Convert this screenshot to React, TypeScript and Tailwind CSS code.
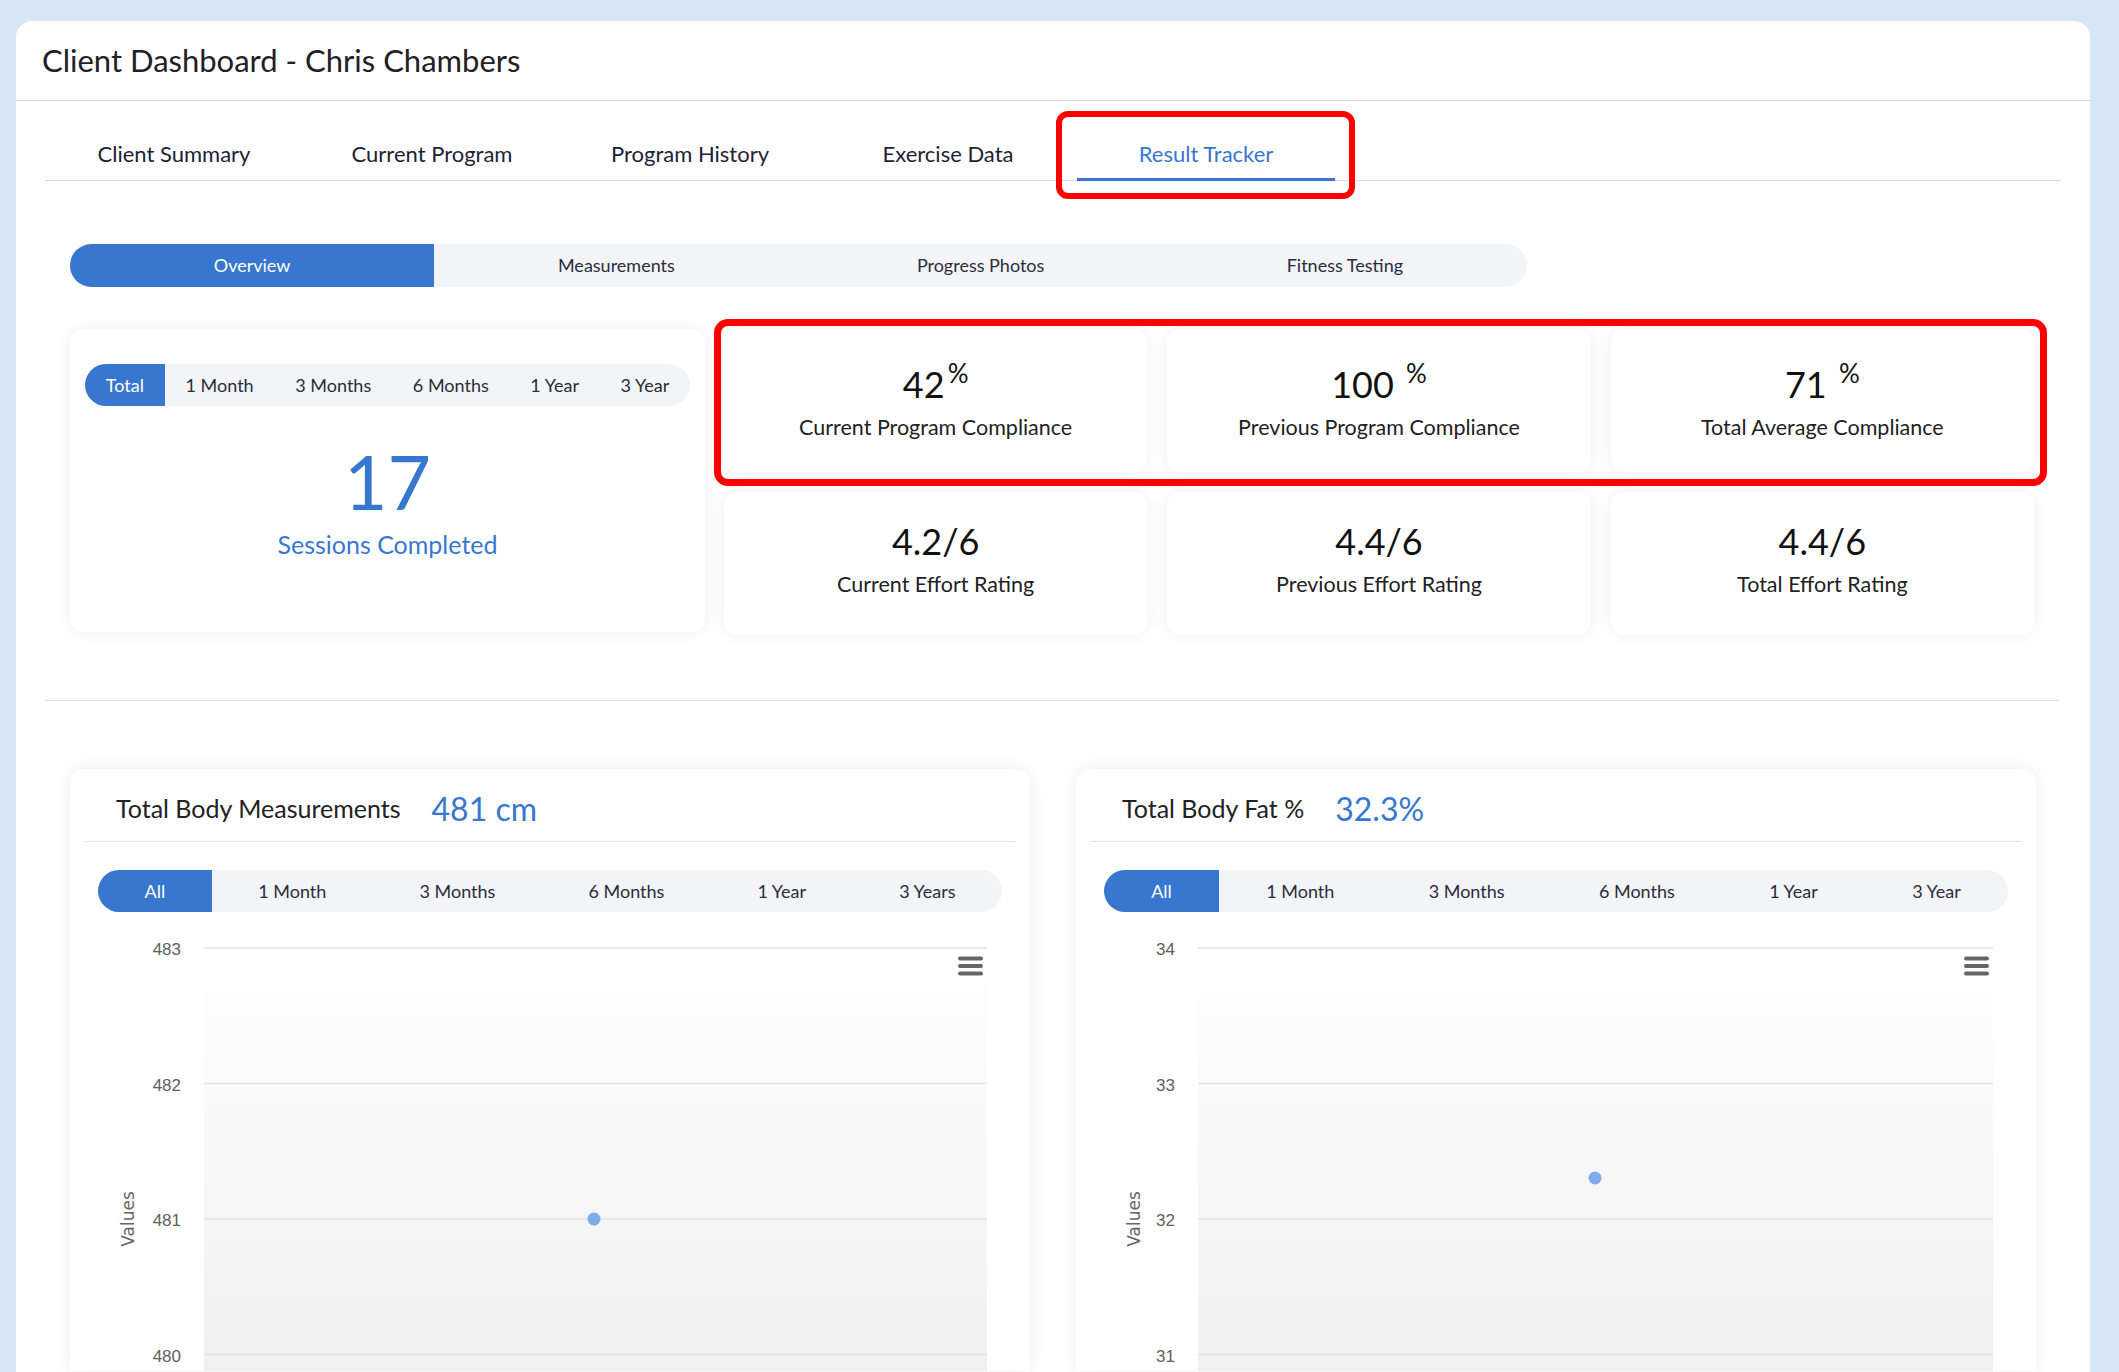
import React from "react";

const mainTabs = ["Client Summary", "Current Program", "Program History", "Exercise Data", "Result Tracker"];
const subTabs = ["Overview", "Measurements", "Progress Photos", "Fitness Testing"];

function PeriodPill({ items, className }: { items: string[]; className: string }) {
  return (
    <div className={`flex h-[42px] rounded-full overflow-hidden bg-[#f2f4f8] ${className}`}>
      {items.map((t, i) => (
        <div
          key={t}
          className={`flex-auto flex items-center justify-center text-[18px] ${
            i === 0 ? "bg-[#3777cf] text-white" : "text-[#2b2d3a]"
          }`}
        >
          {t}
        </div>
      ))}
    </div>
  );
}

function Stat({ value, sup, label, first }: { value: string; sup?: string; label: string; first?: boolean }) {
  return (
    <div
      className={`bg-white rounded-[14px] shadow-[0_0_18px_rgba(0,0,0,0.07)] h-[143px] flex flex-col items-center ${
        first ? "pt-[37px]" : "pt-[31px]"
      }`}
    >
      <div className="flex items-start leading-none text-[36px] text-[#111]">
        <span className="whitespace-pre">{value}</span>
        {sup ? <span className="text-[26px] leading-none -mt-[6px] ml-[3px]">{sup}</span> : null}
      </div>
      <div className="mt-[15px] text-[21.5px] leading-none text-[#222]">{label}</div>
    </div>
  );
}

function Chart({
  labels,
  labelRight,
  plotLeft,
  dot,
}: {
  labels: string[];
  labelRight: number;
  plotLeft: number;
  dot: [number, number];
}) {
  const plotRight = 917;
  const ys = [9, 144.5, 280, 415.5];
  const gid = `g${labelRight}`;
  return (
    <svg width="960" height="432" viewBox="0 0 960 432" className="block">
      <defs>
        <linearGradient id={gid} x1="0" y1="0" x2="0" y2="1">
          <stop offset="0" stopColor="#ffffff" />
          <stop offset="1" stopColor="#f0f0f0" />
        </linearGradient>
      </defs>
      <rect x={plotLeft} y={9} width={plotRight - plotLeft} height={423} fill={`url(#${gid})`} />
      {ys.map((y, i) => (
        <g key={i}>
          <line x1={plotLeft} x2={plotRight} y1={y} y2={y} stroke="#e3e3e3" strokeWidth="1.5" />
          <text
            x={labelRight}
            y={y + 7}
            textAnchor="end"
            fontSize="17"
            fill="#606060"
            fontFamily="'Liberation Sans', sans-serif"
          >
            {labels[i]}
          </text>
        </g>
      ))}
      <text
        x={58}
        y={280}
        transform="rotate(-90 58 280)"
        textAnchor="middle"
        dominantBaseline="central"
        fontSize="17"
        fill="#666"
        fontFamily="'DejaVu Sans', sans-serif"
      >
        Values
      </text>
      <circle cx={dot[0]} cy={dot[1]} r="6.5" fill="#7dacea" />
      <rect x={888} y={17.5} width={25} height={4} rx={2} fill="#666" />
      <rect x={888} y={25} width={25} height={4} rx={2} fill="#666" />
      <rect x={888} y={32.5} width={25} height={4} rx={2} fill="#666" />
    </svg>
  );
}

function ChartCard({
  title,
  value,
  periods,
  chart,
}: {
  title: string;
  value: string;
  periods: string[];
  chart: React.ReactNode;
}) {
  return (
    <div className="w-[960px] bg-white rounded-t-[14px] shadow-[0_0_20px_rgba(0,0,0,0.08)]">
      <div className="mx-[15px] h-[73px] pt-[7px] border-b border-[#e6e6e6] flex items-center pl-[31px] gap-[31px]">
        <span className="text-[25px] leading-none text-[#222]">{title}</span>
        <span className="text-[32px] leading-none text-[#3777cf]">{value}</span>
      </div>
      <PeriodPill items={periods} className="mt-[28px] mx-[28px]" />
      <div className="mt-[27px]">{chart}</div>
    </div>
  );
}

export default function App() {
  return (
    <div className="relative w-[2119px] h-[1372px] overflow-hidden bg-[#d7e6f5] pt-[21px] pl-[16px] pr-[29px] font-['Lato',sans-serif]">
      <div className="bg-white rounded-t-[16px] h-[1351px]">
        <div className="h-[80px] flex items-center pl-[26px] border-b border-[#d4d4d4] text-[31px] text-[#202124]">
          Client Dashboard - Chris Chambers
        </div>

        <div className="mx-[29px] flex border-b border-[#d9d9d9]">
          {mainTabs.map((t, i) => (
            <div
              key={t}
              className={`w-[258px] h-[80px] -mb-px pt-[28px] flex items-center justify-center text-[22px] border-b-[3px] ${
                i === 4 ? "border-[#3777cf] text-[#3777cf]" : "border-transparent text-[#1d2236]"
              }`}
            >
              {t}
            </div>
          ))}
        </div>

        <div className="mt-[63px] ml-[54px] w-[1457px] h-[43px] rounded-full overflow-hidden bg-[#f2f4f8] flex">
          {subTabs.map((t, i) => (
            <div
              key={t}
              className={`flex-1 flex items-center justify-center text-[18px] ${
                i === 0 ? "bg-[#3777cf] text-white" : "text-[#2b2d3a]"
              }`}
            >
              {t}
            </div>
          ))}
        </div>

        <div className="mt-[42px] ml-[54px] flex gap-[19px]">
          <div className="w-[635px] h-[303px] bg-white rounded-[14px] shadow-[0_0_18px_rgba(0,0,0,0.07)] px-[15px] pt-[35px] flex flex-col">
            <PeriodPill items={["Total", "1 Month", "3 Months", "6 Months", "1 Year", "3 Year"]} className="" />
            <div className="mt-[38px] text-center text-[75px] leading-none text-[#3777cf]">17</div>
            <div className="mt-[13px] text-center text-[25px] leading-none text-[#3777cf]">Sessions Completed</div>
          </div>
          <div className="w-[1310px] grid grid-cols-3 gap-[20px]">
            <Stat first value="42" sup="%" label="Current Program Compliance" />
            <Stat first value="100 " sup="%" label="Previous Program Compliance" />
            <Stat first value="71 " sup="%" label="Total Average Compliance" />
            <Stat value="4.2/6" label="Current Effort Rating" />
            <Stat value="4.4/6" label="Previous Effort Rating" />
            <Stat value="4.4/6" label="Total Effort Rating" />
          </div>
        </div>

        <div className="mt-[65px] ml-[29px] mr-[31px] border-t border-[#e2e2e2]" />

        <div className="mt-[68px] ml-[54px] flex gap-[46px]">
          <ChartCard
            title="Total Body Measurements"
            value="481 cm"
            periods={["All", "1 Month", "3 Months", "6 Months", "1 Year", "3 Years"]}
            chart={<Chart labels={["483", "482", "481", "480"]} labelRight={111} plotLeft={134} dot={[524, 280]} />}
          />
          <ChartCard
            title="Total Body Fat %"
            value="32.3%"
            periods={["All", "1 Month", "3 Months", "6 Months", "1 Year", "3 Year"]}
            chart={<Chart labels={["34", "33", "32", "31"]} labelRight={99} plotLeft={122} dot={[519, 239]} />}
          />
        </div>
      </div>

      <div className="absolute left-[1056px] top-[111px] w-[299px] h-[88px] border-[6px] border-[#ff0000] rounded-[12px]" />
      <div className="absolute left-[714px] top-[319px] w-[1333px] h-[167px] border-[7px] border-[#ff0000] rounded-[14px]" />
    </div>
  );
}
